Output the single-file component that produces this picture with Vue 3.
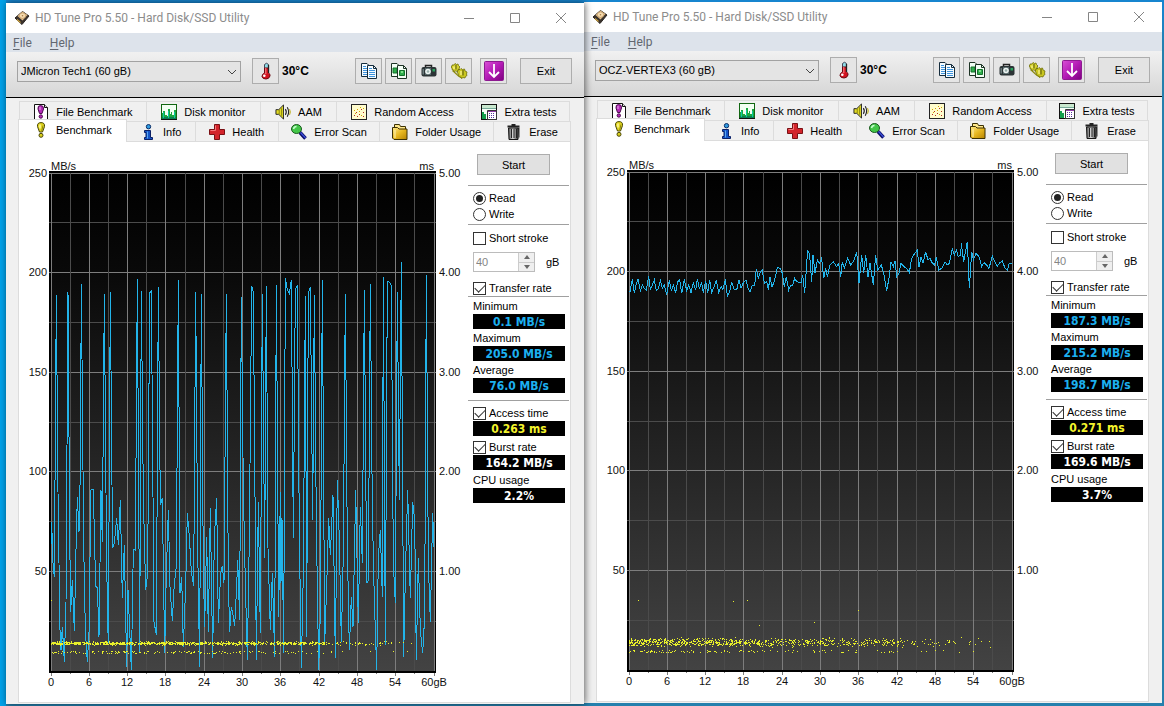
<script setup>
import { reactive } from 'vue'

const topTabs = [
  { label: 'File Benchmark', icon: 'file-bench', grow: 127 },
  { label: 'Disk monitor', icon: 'monitor', grow: 114 },
  { label: 'AAM', icon: 'speaker', grow: 76 },
  { label: 'Random Access', icon: 'random', grow: 132 },
  { label: 'Extra tests', icon: 'extra', grow: 101 },
]
const bottomTabs = [
  { label: 'Benchmark', icon: 'bench', grow: 108, active: true },
  { label: 'Info', icon: 'info', grow: 69 },
  { label: 'Health', icon: 'health', grow: 83 },
  { label: 'Error Scan', icon: 'scan', grow: 102 },
  { label: 'Folder Usage', icon: 'folder', grow: 114 },
  { label: 'Erase', icon: 'erase', grow: 77 },
]
const tools = [
  { label: 'Copy text', icon: 'copy' },
  { label: 'Copy screenshot', icon: 'copy-shot' },
  { label: 'Save screenshot', icon: 'camera' },
  { label: 'Options', icon: 'gears' },
]

const jmicron = '0,1116 2,1046 6,1171 10,1211 16,366 21,956 24,1171 27,1371 30,1431 34,1361 40,1466 45,1291 51,357 56,1076 59,1316 64,1221 70,1374 76,1081 79,971 84,1076 88,891 91,333 96,891 99,1166 103,1371 109,1466 115,1361 119,951 127,949 130,1081 134,1241 139,1243 144,1391 150,951 154,1106 160,363 165,961 169,1311 172,1411 178,357 183,936 185,1126 190,1111 197,1036 202,1116 208,981 214,1276 220,1116 227,1481 231,1251 241,1491 247,1129 253,1131 259,317 266,1441 271,353 277,971 284,1251 290,1201 296,359 301,354 307,1091 309,1346 316,1386 322,341 328,996 334,976 341,1441 346,1201 352,1011 357,1241 364,1344 370,1231 376,1181 382,321 387,1261 392,1211 397,1421 404,1241 409,1021 415,1091 421,1196 428,1239 434,357 440,1121 446,1483 451,364 457,1191 461,1361 467,1091 472,1376 478,1006 485,1456 490,1091 497,976 502,1351 509,1201 514,1179 519,1231 526,363 532,1221 536,1376 541,1301 547,1331 551,1359 557,1241 560,1161 566,1341 571,372 576,851 580,1106 589,1461 595,1091 602,339 607,357 616,1461 622,986 628,1381 634,363 641,1156 646,339 651,1126 658,1371 664,1201 671,1451 676,336 683,1331 688,956 690,1231 693,1036 698,1441 703,315 709,351 715,363 721,321 727,1096 733,349 739,336 745,1081 751,1486 757,1201 763,369 767,1391 772,359 778,343 785,1041 790,366 796,1051 803,1491 808,1321 814,321 821,1411 827,1241 833,1036 838,1146 846,966 853,1456 859,921 865,1101 871,1406 877,1141 883,363 889,1121 895,1431 901,1271 906,1361 914,951 922,1351 928,1001 934,1171 940,351 947,1231 952,1221 958,333 964,1011 970,1281 977,1491 982,1151 988,1071 994,1271 997,313 1003,1416 1009,324 1015,327 1021,339 1027,1171 1033,1291 1039,357 1045,981 1051,267 1058,1451 1064,1171 1070,951 1078,1276 1085,986 1091,1041 1096,1461 1102,1156 1108,1371 1115,1441 1121,1331 1126,306 1132,1171 1138,1346 1145,1021 1149,1121'

const vertex = '30,185 37,148 43,190 49,160 54,148 61,182 67,165 72,175 79,180 86,138 91,178 97,165 103,150 109,182 115,175 121,152 127,175 133,165 140,195 148,150 154,183 160,165 167,188 173,155 179,150 185,190 193,148 200,182 206,165 213,188 220,158 227,180 232,148 238,175 245,158 250,188 257,153 263,190 269,150 275,188 284,165 289,150 296,188 303,170 309,178 316,148 322,198 329,185 335,155 342,178 350,180 357,150 363,175 370,158 378,150 384,175 390,186 397,165 404,165 409,118 415,145 421,125 427,120 433,160 440,155 445,180 450,140 456,170 463,155 472,112 481,115 487,130 493,170 499,140 506,180 513,165 518,165 524,145 530,155 543,158 548,135 554,190 563,60 569,75 575,155 579,75 585,130 592,90 598,100 605,85 611,145 617,115 622,140 630,105 640,95 650,110 656,100 662,140 667,95 673,115 683,85 692,105 700,95 710,65 717,160 725,75 731,130 737,75 744,140 750,100 760,165 767,75 773,120 784,105 791,130 800,182 807,145 813,95 820,110 825,92 830,140 837,130 843,100 852,110 860,115 868,128 875,85 883,72 892,60 897,110 903,80 909,100 917,65 924,90 930,85 936,98 944,105 949,80 956,120 965,115 975,95 981,105 988,100 997,55 1003,75 1009,60 1015,80 1022,75 1024,40 1031,95 1042,35 1048,175 1055,65 1060,90 1068,70 1077,80 1085,110 1092,98 1100,105 1107,115 1117,78 1124,95 1132,108 1140,98 1147,92 1155,115 1162,120 1168,100 1175,100'

// Small deterministic generator so the access-time scatter is stable between renders
function scatter(seed, count, spread, even, extra) {
  let s = seed
  const rnd = () => ((s = (s * 16807) % 2147483647) / 2147483647)
  const dots = extra.map(([x, y]) => `M${x} ${y}h1v1h-1z`)
  for (let i = 0; i < count; i++) {
    const x = Math.floor(rnd() < even ? rnd() * 275 : 370 * (1 - Math.sqrt(1 - rnd())))
    const low = rnd() < 0.13
    const y = low
      ? 478 + Math.floor(rnd() * 3)
      : Math.round(470 + (rnd() + rnd() - 1) * spread)
    dots.push(`M${x} ${y}h1v1h-1z`)
  }
  return dots.join('')
}

const drives = reactive([
  {
    id: 'jmicron', name: 'JMicron Tech1 (60 gB)', temp: '30°C', mode: 'read',
    short: false, rate: true, access: true, burst: true, size: 40,
    min: '0.1 MB/s', max: '205.0 MB/s', avg: '76.0 MB/s',
    accessTime: '0.263 ms', burstRate: '164.2 MB/s', cpu: '2.2%',
    trace: jmicron, origin: 'translate(0 0)',
    dots: scatter(417, 1100, 2, 0.4, [[0, 427]]),
  },
  {
    id: 'vertex', name: 'OCZ-VERTEX3 (60 gB)', temp: '30°C', mode: 'read',
    short: false, rate: true, access: true, burst: true, size: 40,
    min: '187.3 MB/s', max: '215.2 MB/s', avg: '198.7 MB/s',
    accessTime: '0.271 ms', burstRate: '169.6 MB/s', cpu: '3.7%',
    trace: vertex, origin: 'translate(-27 174)',
    dots: scatter(9231, 900, 5, 0.2, [[9, 428], [104, 429], [118, 428], [229, 438], [185, 450], [130, 453], [332, 465], [361, 475]]),
  },
])

const rows = [0, 1, 2, 3, 4, 5, 6, 7, 8, 9, 10].map((i) => ({
  y: Math.floor(31 + i * 49.8),
  major: i % 2 === 0,
  left: i < 10 ? 250 - i * 25 : '',
  right: i < 10 ? (5 - i / 2).toFixed(2) : '',
}))
const cols = Array.from({ length: 21 }, (_, i) => ({
  x: Math.floor(32 + i * 19.15),
  major: i % 2 === 0,
  label: i === 20 ? '60gB' : i * 3,
}))
</script>

<template>
  <svg class="defs" aria-hidden="true">
    <defs>
      <linearGradient id="plot-bg" x1="0" y1="0" x2="0" y2="1">
        <stop offset="0" stop-color="#000" /><stop offset=".2" stop-color="#090909" /><stop offset="1" stop-color="#434343" />
      </linearGradient>
      <linearGradient id="violet" x1="0" y1="0" x2="1" y2="1">
        <stop offset="0" stop-color="#d94fd6" /><stop offset=".5" stop-color="#b31bb5" /><stop offset="1" stop-color="#7d007f" />
      </linearGradient>
      <linearGradient id="bin" x1="0" y1="0" x2="1" y2="0">
        <stop offset="0" stop-color="#555" /><stop offset=".45" stop-color="#ddd" /><stop offset="1" stop-color="#222" />
      </linearGradient>
      <linearGradient id="gold" x1="0" y1="0" x2="1" y2="1">
        <stop offset="0" stop-color="#ffe98a" /><stop offset=".5" stop-color="#e8b820" /><stop offset="1" stop-color="#b58200" />
      </linearGradient>
    </defs>
    <symbol id="i-app" viewBox="0 0 16 16">
      <path d="M1 8 8.500 1.500 15 6l-7 8.500z" fill="#3a322c" stroke="#2a2420" />
      <path d="m3.500 6 5-4.500L13.500 5 8.500 10.500z" fill="#e3c08c" />
      <ellipse cx="8.500" cy="5.700" rx="3.200" ry="2.700" fill="#f6dcb0" stroke="#b58a54" stroke-width=".6" />
      <path d="m3 9.500 3.500 3" stroke="#c9a040" stroke-width="1.200" /><circle cx="8.500" cy="5.700" r=".8" fill="#a87c48" />
    </symbol>
    <symbol id="i-thermo" viewBox="0 0 18 18">
      <path d="M7.500 2.500q2-2.500 4 0V10h-4z" fill="#8edce8" stroke="#445" />
      <path d="M7.500 6h4v5q2 1 1.500 3-1 3-4 3-3.500 0-4-2.500Q5 12 7.500 11z" fill="#d31320" stroke="#6b0710" />
      <path d="M8.800 6v6" stroke="#ff8d8d" /><circle cx="7.300" cy="13.800" r="1.300" fill="#fff" />
      <path d="M11.500 3v8" stroke="#222" stroke-width="1.300" />
    </symbol>
    <symbol id="i-copy" viewBox="0 0 18 18">
      <path d="M1.500 1.500h5.500l2.500 2.500v10.500h-8z" fill="#f4fbff" stroke="#152c3c" />
      <path d="M3 4.500h3M3 6.500h5M3 8.500h5M3 10.500h5M3 12.500h5" stroke="#3e93dc" />
      <path d="M7.500 3.500h6l3 3v10h-9z" fill="#f4fbff" stroke="#152c3c" />
      <path d="M13.500 3.500v3h3" fill="none" stroke="#152c3c" />
      <path d="M9 6.500h3M9 8.500h6M9 10.500h6M9 12.500h6M9 14.500h6" stroke="#3e93dc" />
    </symbol>
    <symbol id="i-copy-shot" viewBox="0 0 18 18">
      <path d="M1.500 1.500h5.500l2.500 2.500v10.500h-8z" fill="#f3fff5" stroke="#1d3324" />
      <path d="M3 6h4v5H3z" fill="#2fae4c" stroke="#14722b" />
      <path d="M7.500 3.500h6l3 3v10h-9z" fill="#f3fff5" stroke="#1d3324" />
      <path d="M13.500 3.500v3h3" fill="none" stroke="#1d3324" />
      <path d="M9.500 8.500h5v5h-5z" fill="#2fae4c" stroke="#14722b" /><path d="M11 9h2v2h-2z" fill="#7fe08a" />
    </symbol>
    <symbol id="i-camera" viewBox="0 0 18 18">
      <path d="M5.500 6V3.500h6V6" fill="#ddd" stroke="#222" stroke-width="1.500" />
      <rect x="1.500" y="5" width="15" height="9.500" rx="2" fill="#2c3436" />
      <path d="M2.500 7v5.500h1.500V7z" fill="#68787a" />
      <path d="M5 6h6v7H5z" fill="#56686a" /><circle cx="8" cy="9.500" r="2.800" fill="#eef4f2" /><circle cx="8" cy="9.500" r="1.300" fill="#9ab0ae" />
      <path d="M12.500 7h2.500v2.500h-2.500z" fill="#29a35c" />
    </symbol>
    <symbol id="i-gears" viewBox="0 0 18 18">
      <path d="m1 5 1-1 0-1 2 0 1-1.500 1.500 1L8 2l.5 1.500L10 5 9 6l.5 1.500L8 8l-.5 1.500L5.500 9 4 9.500 3.500 8 2 7.500 2 6z" fill="#d4d12c" stroke="#6f6e08" stroke-width=".8" />
      <path d="m7 10 1-1V7.500h2L11 6.500l1.500 1L14.500 7l.5 2 2 1-.5 2 .5 1.500-1.500 1-.5 1.500-2-.5-1.500 1-1.500-1.500L8.500 14V12.500z" fill="#c9c620" stroke="#6f6e08" stroke-width=".8" />
      <path d="M4 4.500v2.500M11 9v4" stroke="#fff799" stroke-width="1.200" /><path d="M6 3v4.500M13 8v5.500" stroke="#55540a" />
      <path d="m2.500 8.500 6 5.500 3.500 2" fill="none" stroke="#8a880f" stroke-width="1.200" />
    </symbol>
    <symbol id="i-save" viewBox="0 0 20 20">
      <rect x=".5" y=".5" width="19" height="19" rx="1" fill="url(#violet)" stroke="#8d1a90" />
      <path d="M10 3v13M5 11l5 5 5-5" fill="none" stroke="#fff" stroke-width="1.800" />
    </symbol>
    <symbol id="i-file-bench" viewBox="0 0 16 16">
      <path d="M1.500.5h10l3 3v12h-13z" fill="#fff" stroke="#111" />
      <path d="M11.500.5v3h3" fill="#ddd" stroke="#111" />
      <path d="M7.500 1.500q3.500 0 3 3.500L9 9.500H6.500L5 5q-.5-3.500 2.500-3.500z" fill="#b32bb8" stroke="#4d0b50" />
      <circle cx="7.800" cy="12.500" r="1.700" fill="#b32bb8" stroke="#4d0b50" /><path d="M7 3v3" stroke="#f0a8f2" />
    </symbol>
    <symbol id="i-monitor" viewBox="0 0 16 16">
      <rect x=".5" y=".5" width="15" height="15" fill="#f3fff3" stroke="#161" />
      <path d="M1 15V9h1V7h2v4h2v1h1V5h2v5h1V8h1v3h2V6h2v9z" fill="#1ca83e" />
      <path d="M1 15v-2h14v2z" fill="#0a8050" /><path d="M2.500 8v6M7.500 7v7M13.500 8v6" stroke="#0cc8a0" />
      <path d="M0 15.500h16" stroke="#111" />
    </symbol>
    <symbol id="i-speaker" viewBox="0 0 17 16">
      <path d="M1 5.500h3l5-5v15l-5-5H1z" fill="#e1da26" stroke="#222" />
      <path d="M4.500 5.500v5M7 4v8" stroke="#88840c" />
      <path d="M11 5q2 3 0 6M13 3q3 5 0 10" fill="none" stroke="#222" stroke-width="1.200" /><path d="M15.500 5q1.500 3 0 6" fill="none" stroke="#b8a800" />
    </symbol>
    <symbol id="i-random" viewBox="0 0 16 16">
      <rect x=".5" y=".5" width="15" height="15" fill="#fffccd" stroke="#222" />
      <path d="M3 11h1v1H3zM5 8h1v1H5zM8 10h1v1H8zM10 5h1v1h-1zM12 8h1v1h-1zM6 12h1v1H6zM12 12h1v1h-1z" fill="#b52a20" />
      <path d="M3 6h1v1H3zM6 5h1v1H6zM8 7h1v1H8zM12 4h1v1h-1zM10 11h1v1h-1zM4 9h1v1H4zM9 3h1v1H9z" fill="#d1a400" />
    </symbol>
    <symbol id="i-extra" viewBox="0 0 16 16">
      <rect x=".5" y=".5" width="15" height="15" fill="#f6fff8" stroke="#111" />
      <path d="M1 1h14v3H1z" fill="#c9e8cf" /><path d="M1 15V8h2v2h2v5z" fill="#129e4c" />
      <path d="M1 4.500h14" stroke="#7a9" />
      <path d="M6.500 6.500h9v9h-9z" fill="#fff" stroke="#333" /><path d="M7 7h8v1H7z" fill="#8f3ca6" />
      <path d="M8 9.500h1m1 0h1m1 0h1M8 11.500h1m1 0h1m1 0h1M8 13.500h1m1 0h1m1 0h1" stroke="#5530a0" />
    </symbol>
    <symbol id="i-bench" viewBox="0 0 16 16">
      <path d="M8 .6q4 0 3.500 4L9.500 10h-3l-2-5.400Q4 .6 8 .6z" fill="#e0d520" stroke="#4a4708" />
      <path d="M7 2.500v4" stroke="#fffbb0" stroke-width="1.400" /><path d="M10 3.500 8.700 9" stroke="#8d870f" />
      <circle cx="8" cy="13.300" r="2" fill="#d8ce1c" stroke="#4a4708" />
    </symbol>
    <symbol id="i-info" viewBox="0 0 16 16">
      <circle cx="8.500" cy="2.700" r="2.200" fill="#2f9be0" stroke="#0b2c66" />
      <path d="M4.500 6.500h6v7h2v2h-8v-2h1.500v-5H4.500z" fill="#1554c8" stroke="#0b2066" /><path d="M7.500 7.500v7" stroke="#58a7f0" />
    </symbol>
    <symbol id="i-health" viewBox="0 0 16 16">
      <path d="M5.500.5h5v5h5v5h-5v5h-5v-5h-5v-5h5z" fill="#d3242b" stroke="#7a1014" />
      <path d="M6.500 1.500v5h-5" fill="none" stroke="#f5777b" />
    </symbol>
    <symbol id="i-scan" viewBox="0 0 16 16">
      <path d="m9 8.500 5.500 6" stroke="#0b0b66" stroke-width="3.600" /><path d="m9.500 8.500 5 5.500" stroke="#3c51d8" stroke-width="1.300" />
      <ellipse cx="5.500" cy="5" rx="5" ry="4.500" fill="#43c648" stroke="#1c5b20" /><path d="M2.500 5q.5-2.500 3-2.500" fill="none" stroke="#c8ffd0" stroke-width="1.500" />
    </symbol>
    <symbol id="i-folder" viewBox="0 0 16 16">
      <path d="M2.500 3V.5h5l1 2h5v11" fill="#ffe88a" stroke="#3c3104" />
      <path d="M.5 3.500h5l1.500 1.500h8v10.500H2L.5 14z" fill="url(#gold)" stroke="#3c3104" /><path d="M3 6v8" stroke="#fff2b0" />
    </symbol>
    <symbol id="i-erase" viewBox="0 0 16 16">
      <path d="M1.500 2.500h12M5.500 1h4" stroke="#222" stroke-width="2" />
      <path d="M2.500 4h10l-.5 11.500H3z" fill="url(#bin)" stroke="#161616" /><path d="M5.500 5v9M8 5v9M10.500 5v9" stroke="#222" />
      <path d="M13 3.500v10" stroke="#333" />
    </symbol>
  </svg>

  <main class="desktop">
    <section v-for="d in drives" :key="d.id" class="window" :class="d.id">
      <header class="titlebar">
        <svg class="app-icon"><use href="#i-app" /></svg>
        <h1>HD Tune Pro 5.50 - Hard Disk/SSD Utility</h1>
        <button class="caption" aria-label="Minimize"><svg viewBox="0 0 12 12"><path d="M1 6.500h10" /></svg></button>
        <button class="caption" aria-label="Maximize"><svg viewBox="0 0 12 12"><path d="M1.500 1.500h9v9h-9z" /></svg></button>
        <button class="caption" aria-label="Close"><svg viewBox="0 0 12 12"><path d="m1 1 10 10M11 1 1 11" /></svg></button>
      </header>

      <nav class="menu">
        <button><u>F</u>ile</button>
        <button><u>H</u>elp</button>
      </nav>

      <div class="toolbar">
        <div class="combo">
          <select aria-label="Drive"><option>{{ d.name }}</option></select>
          <svg viewBox="0 0 10 6"><path d="m1 1 4 4 4-4" /></svg>
        </div>
        <button class="tool thermo" aria-label="Temperature"><svg><use href="#i-thermo" /></svg></button>
        <strong class="temp">{{ d.temp }}</strong>
        <div class="tools">
          <button v-for="t in tools" :key="t.icon" class="tool" :aria-label="t.label"><svg><use :href="'#i-' + t.icon" /></svg></button>
        </div>
        <button class="tool save" aria-label="Save results"><svg><use href="#i-save" /></svg></button>
        <button class="exit">Exit</button>
      </div>

      <div class="client">
        <div class="tabs upper">
          <button v-for="t in topTabs" :key="t.icon" class="tab" :style="{ flexGrow: t.grow }">
            <svg><use :href="'#i-' + t.icon" /></svg>{{ t.label }}
          </button>
        </div>
        <div class="tabs lower">
          <button v-for="t in bottomTabs" :key="t.icon" class="tab" :class="{ active: t.active }" :style="{ flexGrow: t.grow }">
            <svg><use :href="'#i-' + t.icon" /></svg>{{ t.label }}
          </button>
        </div>

        <div class="page">
          <svg class="chart" viewBox="0 0 449 555" role="img" :aria-label="'Transfer rate of ' + d.name">
            <rect x="30" y="29" width="387" height="502" fill="#000" />
            <rect x="32" y="31" width="384" height="498" fill="url(#plot-bg)" />
            <g shape-rendering="crispEdges">
              <rect v-for="r in rows" :key="'r' + r.y" x="30" :y="r.y" width="387" height="1" :class="r.major ? 'major' : 'minor'" />
              <rect v-for="c in cols" :key="'c' + c.x" :x="c.x" y="31" width="1" height="498" :class="c.major ? 'major' : 'minor'" />
              <rect v-for="c in cols" :key="'t' + c.x" :x="c.x" y="531" width="1" :height="c.major ? 3 : 1" class="major" />
              <rect x="30" y="529" width="387" height="2" fill="#000" />
            </g>
            <svg x="32" y="31" width="384" height="498" viewBox="0 0 1152 1494" preserveAspectRatio="none">
              <polyline class="trace" :points="d.trace" :transform="d.origin" shape-rendering="crispEdges" />
            </svg>
            <g transform="translate(32 31)"><path class="dots" :d="d.dots" shape-rendering="crispEdges" /></g>
            <g class="labels">
              <text x="32" y="28">MB/s</text>
              <text x="415" y="28" text-anchor="end">ms</text>
              <template v-for="r in rows" :key="'l' + r.y">
                <text v-if="r.major" x="28" :y="r.y + 4" text-anchor="end">{{ r.left }}</text>
                <text v-if="r.major" x="420" :y="r.y + 4">{{ r.right }}</text>
              </template>
              <template v-for="c in cols" :key="'x' + c.x">
                <text v-if="c.major" :x="c.x" y="544" text-anchor="middle">{{ c.label }}</text>
              </template>
            </g>
          </svg>

          <aside class="side">
            <button class="start">Start</button>
            <div class="group modes">
              <label><input v-model="d.mode" type="radio" :name="d.id + '-mode'" value="read" />Read</label>
              <label><input v-model="d.mode" type="radio" :name="d.id + '-mode'" value="write" />Write</label>
            </div>
            <div class="group options">
              <label><input v-model="d.short" type="checkbox" />Short stroke</label>
              <div class="stroke">
                <div class="spin">
                  <input v-model="d.size" type="number" disabled aria-label="Short stroke size" />
                  <div class="arrows">
                    <button disabled aria-label="Increase"><svg viewBox="0 0 6 4"><path d="m0 4 3-4 3 4z" /></svg></button>
                    <button disabled aria-label="Decrease"><svg viewBox="0 0 6 4"><path d="m0 0 3 4 3-4z" /></svg></button>
                  </div>
                </div>
                <span>gB</span>
              </div>
              <label><input v-model="d.rate" type="checkbox" />Transfer rate</label>
            </div>
            <div class="group speeds">
              <div class="stat"><span>Minimum</span><output class="cyan">{{ d.min }}</output></div>
              <div class="stat"><span>Maximum</span><output class="cyan">{{ d.max }}</output></div>
              <div class="stat"><span>Average</span><output class="cyan">{{ d.avg }}</output></div>
            </div>
            <div class="group others">
              <div class="stat"><label><input v-model="d.access" type="checkbox" />Access time</label><output class="yellow">{{ d.accessTime }}</output></div>
              <div class="stat"><label><input v-model="d.burst" type="checkbox" />Burst rate</label><output>{{ d.burstRate }}</output></div>
              <div class="stat"><span>CPU usage</span><output>{{ d.cpu }}</output></div>
            </div>
          </aside>
        </div>
      </div>
    </section>
  </main>
</template>

<style>
body { background: #1a86c8; }
</style>

<style scoped>
* { box-sizing: border-box; }
button, input, select { font: inherit; color: inherit; margin: 0; padding: 0; border: 0; background: none; border-radius: 0; }
svg { display: block; flex: none; }
.defs { position: absolute; width: 0; height: 0; }
.desktop {
  min-height: 100vh; display: grid; grid-template-columns: 1fr 1fr; padding: 3px 2px 2px 6px;
  background: linear-gradient(90deg, #00a2ea 6px, transparent 6px), linear-gradient(#1785cf 0 10px, #2580ad 50px);
  font-family: "Liberation Sans", Arial, sans-serif; font-size: 11px; line-height: 14px; color: #000;
}
.window { display: flex; flex-direction: column; min-width: 0; background: #f0f0f0; }
.jmicron { position: relative; z-index: 1; box-shadow: 1px 0 7px rgba(0, 0, 0, .6); }
.vertex { margin-top: -1px; margin-bottom: 1px; }

.titlebar { display: flex; align-items: center; height: 30px; background: #fff; padding-left: 8px; color: #8c8c8c; }
.app-icon { width: 16px; height: 16px; }
.titlebar h1 { flex: 1; margin: 0 0 0 5px; font: 12px/16px Roboto, "Open Sans", sans-serif; white-space: nowrap; overflow: hidden; }
.caption { width: 46px; height: 30px; display: grid; place-items: center; }
.caption svg { width: 12px; height: 12px; fill: none; stroke: #858585; }

.menu { display: flex; gap: 18px; height: 19px; padding-left: 7px; background: #dde3eb; color: #626770; font: 12px/20px Roboto, "Open Sans", sans-serif; }
.menu u { text-underline-offset: 2px; }

.toolbar { display: flex; align-items: center; height: 46px; padding: 0 12px 7px 11px; background: linear-gradient(#f1f1f1, #d6d6d6); border-bottom: 1px solid #000; }
.combo { flex: 1; max-width: 224px; position: relative; }
.combo select { display: block; width: 100%; height: 21px; padding-left: 3px; appearance: none; border: 1px solid #a2a2a2; background: #e4e4e4; }
.combo svg { position: absolute; right: 4px; top: 8px; width: 10px; height: 6px; fill: none; stroke: #444; pointer-events: none; }
.tool { width: 27px; height: 26px; display: grid; place-items: center; border: 1px solid #adadad; background: #e5e5e5; }
.tool svg { width: 18px; height: 18px; }
.thermo { margin-left: 11px; }
.temp { margin-left: 3px; font-size: 12px; }
.tools { display: flex; gap: 3px; margin-left: auto; }
.save { margin-left: 8px; }
.save svg { width: 20px; height: 20px; }
.exit { width: 52px; height: 26px; margin-left: 13px; border: 1px solid #adadad; background: #e3e3e3; }

.client { flex: 1; display: flex; flex-direction: column; padding: 3px 13px 1px 12px; }
.tabs { display: flex; position: relative; }
.upper { height: 20px; margin: 0 1px; border-left: 1px solid #dcdcdc; }
.lower { height: 20px; }
.tab { flex: 1 1 0; display: flex; align-items: center; justify-content: center; gap: 7px; border: solid #dcdcdc; border-width: 1px 1px 0 0; white-space: nowrap; }
.tab svg { width: 16px; height: 16px; }
.tab.active { margin-top: -2px; background: #fff; border-left-width: 1px; padding-bottom: 2px; margin-bottom: -1px; }
.page { flex: 1; display: flex; align-items: flex-start; background: #fff; border: 1px solid #dcdcdc; padding-right: 1px; }

.chart { flex: 1; min-width: 0; height: auto; }
.major { fill: #7d7d7d; }
.minor { fill: #4b4b4b; }
.trace { fill: none; stroke: #22b4ea; stroke-width: 1; vector-effect: non-scaling-stroke; }
.dots { fill: #e8f02a; }
.labels { font-size: 11px; fill: #111; }

.side { width: 101px; padding-top: 12px; }
.start { display: block; width: 73px; height: 21px; margin: 0 0 10px 9px; border: 1px solid #adadad; background: #e1e1e1; }
.group { border-top: 1px solid #a0a0a0; padding: 0 4px 0 5px; }
.side label { display: flex; align-items: center; gap: 3px; height: 16px; white-space: nowrap; }
.modes { padding-top: 4px; padding-bottom: 2px; }
.options { padding-top: 5px; }
.speeds { padding-top: 2px; padding-bottom: 5px; }
.others { padding-top: 4px; }
.side input[type="radio"], .side input[type="checkbox"] { appearance: none; width: 13px; height: 13px; border: 1px solid #333; background: #fff; display: grid; place-items: center; }
.side input[type="radio"] { border-radius: 50%; }
.side input[type="radio"]:checked::after { content: ""; width: 7px; height: 7px; border-radius: 50%; background: #222; }
.side input[type="checkbox"]:checked::after { content: ""; width: 9px; height: 5px; margin-top: -3px; border: solid #333; border-width: 0 0 1px 1px; transform: rotate(-45deg); }
.stroke { display: flex; align-items: center; gap: 11px; margin: 6px 0 8px; }
.spin { display: flex; width: 62px; height: 20px; border: 1px solid #bcbcbc; }
.spin input { flex: 1; min-width: 0; padding-left: 2px; background: #fff; color: #858585; appearance: textfield; }
.spin input::-webkit-inner-spin-button { appearance: none; }
.arrows { display: flex; flex-direction: column; width: 16px; border-left: 1px solid #ccc; background: #efefef; }
.arrows button { flex: 1; display: grid; place-items: center; }
.arrows button + button { border-top: 1px solid #ccc; }
.arrows svg { width: 6px; height: 4px; fill: #666; }
.stat { margin-bottom: 3px; }
.stat > span { display: block; height: 15px; }
.speeds .stat { margin-bottom: 2px; }
.stat output { display: block; height: 15px; font-size: 12px; line-height: 16px; text-align: center; background: #000; color: #fff; font-family: "DejaVu Sans Condensed", "Open Sans", sans-serif; font-weight: bold; }
.stat .cyan { color: #1cb0f0; }
.stat .yellow { color: #f4f42c; }
</style>
